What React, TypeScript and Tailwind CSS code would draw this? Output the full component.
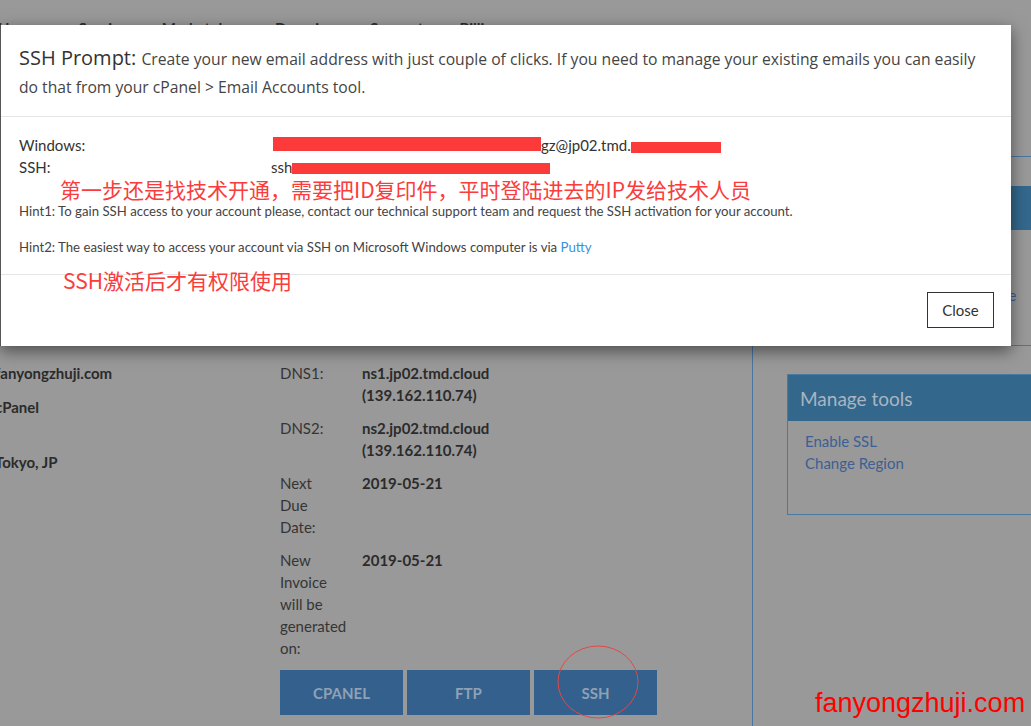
import React from "react";

export default function App() {
  return (
    <div className="relative w-[1031px] h-[726px] overflow-hidden bg-[#999999] font-['Lato',sans-serif] text-[15px] leading-[22px] text-[#2e2e2e]">
      {/* background page (dimmed) */}
      <div className="flex flex-col h-full">
        <nav className="h-[40px] pt-[17px] flex font-bold text-[#2f2f2f]">
          <span className="ml-[-2px]">Home</span>
          <span className="ml-[40px]">Services</span>
          <span className="ml-[28px]">Marketplace</span>
          <span className="ml-[30px]">Domains</span>
          <span className="ml-[36px]">Support</span>
          <span className="ml-[36px]">Billing</span>
        </nav>
        <div className="flex flex-1">
          <main className="w-[752px] pt-[322px] flex">
            <div className="w-[280px] ml-[-5px] pl-0 flex flex-col font-bold text-[#2b2b2b]">
              <span>fanyongzhuji.com</span>
              <span className="mt-[12px]">cPanel</span>
              <span className="mt-[33px]">Tokyo, JP</span>
            </div>
            <div className="ml-[5px] flex flex-col">
              <div className="grid grid-cols-[72px_auto] gap-x-[10px] gap-y-[11px] text-[#353535]">
                <span>DNS1:</span>
                <span className="font-bold text-[#2b2b2b]">ns1.jp02.tmd.cloud<br />(139.162.110.74)</span>
                <span>DNS2:</span>
                <span className="font-bold text-[#2b2b2b]">ns2.jp02.tmd.cloud<br />(139.162.110.74)</span>
                <span>Next<br />Due<br />Date:</span>
                <span className="font-bold text-[#2b2b2b]">2019-05-21</span>
                <span>New<br />Invoice<br />will be<br />generated<br />on:</span>
                <span className="font-bold text-[#2b2b2b]">2019-05-21</span>
              </div>
              <div className="mt-[11px] flex gap-[4px]">
                <div className="w-[123px] h-[45px] bg-[#33608c] flex items-center justify-center font-bold text-[#8fa1b4]">CPANEL</div>
                <div className="w-[123px] h-[45px] bg-[#33608c] flex items-center justify-center font-bold text-[#8fa1b4]">FTP</div>
                <div className="w-[123px] h-[45px] bg-[#33608c] flex items-center justify-center font-bold text-[#8fa1b4]">SSH</div>
              </div>
            </div>
          </main>
          <aside className="flex-1 border-l border-[#4a76a0] pt-[116px] pl-[34px] overflow-hidden">
            <div className="w-[270px] h-[190px] border border-[#4a76a0] pt-[29px]">
              <div className="h-[44px] bg-[#34688d]" />
              <div className="pt-[54px] pl-[17px] text-[#3d5f95] whitespace-nowrap">Upgrade / Downgrade Resource</div>
            </div>
            <div className="mt-[28px] w-[270px] border border-[#4a7aa0]">
              <div className="h-[46px] bg-[#33678c] pl-[12px] pt-[2px] flex items-center text-[19px] text-[#a9b5c0]">Manage tools</div>
              <div className="h-[93px] pt-[9px] pl-[17px] flex flex-col text-[#3d5f95]">
                <span>Enable SSL</span>
                <span>Change Region</span>
              </div>
            </div>
          </aside>
        </div>
      </div>

      {/* modal */}
      <div className="absolute left-0 top-[25px] w-[1011px] bg-white border-l border-[#555555] shadow-[0_5px_15px_rgba(0,0,0,0.5)]">
        <div className="px-[18px] pt-[19px] pb-[16px] border-b border-[#e5e5e5]">
          <p className="font-['Open_Sans',sans-serif] text-[20px] leading-[28px] text-[#333333]">
            SSH Prompt: <span className="text-[15.7px] leading-[20px] text-[#444444]">Create your new email address with just couple of clicks. If you need to manage your existing emails you can easily do that from your cPanel &gt; Email Accounts tool.</span>
          </p>
        </div>
        <div className="px-[18px] pt-[17px] pb-[18px] text-[#333333]">
          <div className="flex">
            <span className="w-[252px]">Windows:</span>
            <span className="flex items-start whitespace-nowrap">
              <span className="inline-block w-[268px] h-[14px] mt-[3px] ml-[2px] bg-[#fd3a3a]" />
              <span>gz@jp02.tmd.</span>
              <span className="inline-block w-[90px] h-[11px] mt-[8px] bg-[#fd3a3a]" />
            </span>
          </div>
          <div className="flex">
            <span className="w-[252px]">SSH:</span>
            <span className="flex items-start whitespace-nowrap">
              <span>ssh</span>
              <span className="inline-block w-[258px] h-[11px] mt-[7px] bg-[#fd3a3a]" />
            </span>
          </div>
          <p className="mt-[24px] text-[13.2px] leading-[18px] text-[#444444]">
            Hint1: To gain SSH access to your account please, contact our technical support team and request the SSH activation for your account.
          </p>
          <p className="mt-[18px] text-[13.2px] leading-[18px] text-[#444444]">
            Hint2: The easiest way to access your account via SSH on Microsoft Windows computer is via <span className="text-[#3b8fe0]">Putty</span>
          </p>
        </div>
        <div className="border-t border-[#e5e5e5] px-[17px] pt-[17px] pb-[18px] flex justify-end">
          <button className="h-[36px] w-[67px] border border-[#333333] text-[15px] text-[#333333] bg-white">Close</button>
        </div>
      </div>

      {/* annotations */}
      <div className="absolute left-[60px] top-[179px] whitespace-nowrap font-['Noto_Sans_CJK_SC',sans-serif] text-[21px] leading-none text-[#fb3c3c]">
        第一步还是找技术开通，需要把ID复印件，平时登陆进去的IP发给技术人员
      </div>
      <div className="absolute left-[63px] top-[270px] whitespace-nowrap font-['Noto_Sans_CJK_SC',sans-serif] text-[21px] leading-none text-[#fb3c3c]">
        SSH激活后才有权限使用
      </div>
      <svg className="absolute left-[556px] top-[644px]" width="84" height="76" viewBox="0 0 84 76">
        <ellipse cx="42" cy="38" rx="40" ry="36" fill="none" stroke="#e44848" strokeWidth="1" />
      </svg>
      <div className="absolute left-[815px] top-[688px] whitespace-nowrap font-['Liberation_Sans',Arial,sans-serif] text-[27px] leading-[31px] text-[#ff0000]">
        fanyongzhuji.com
      </div>
    </div>
  );
}
